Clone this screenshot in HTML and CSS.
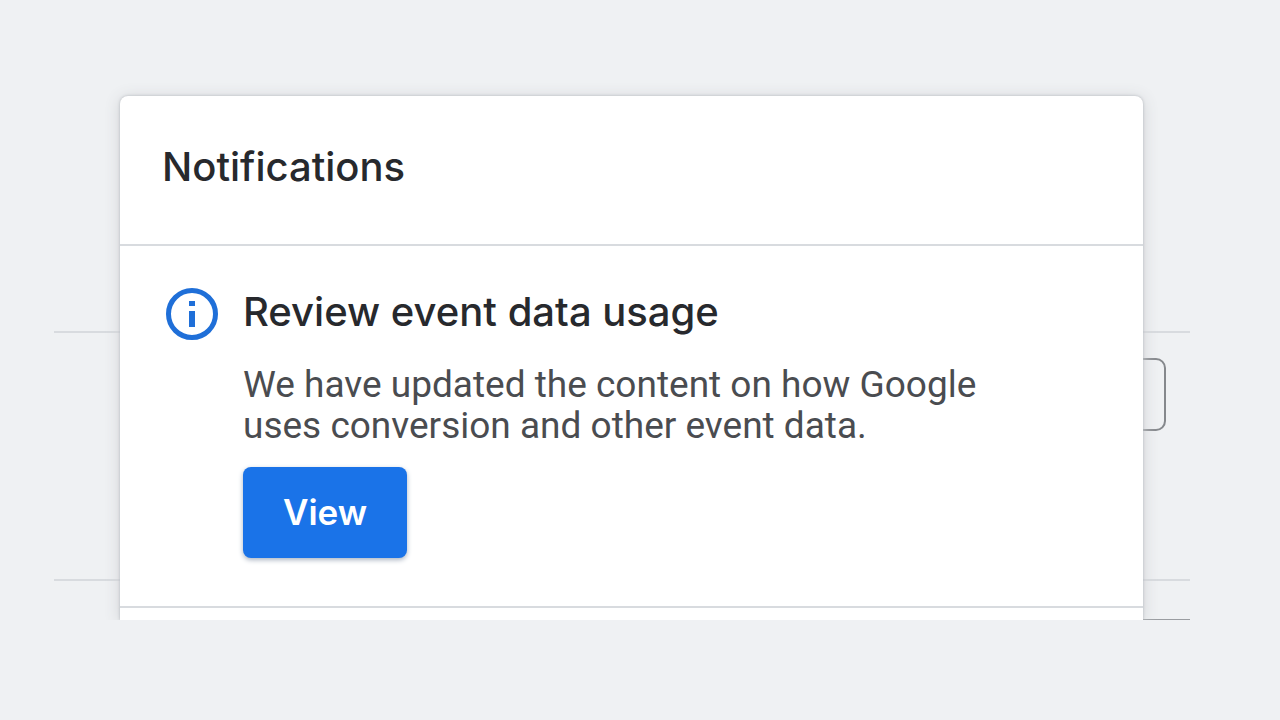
FILE: index.html
```html
<!DOCTYPE html>
<html lang="en">
<head>
<meta charset="utf-8">
<meta name="viewport" content="width=device-width, initial-scale=1">
<title>Notifications</title>
<link rel="stylesheet" href="styles.css">
</head>
<body>
<main class="stage">
  <div class="backdrop" aria-hidden="true">
    <div class="backdrop-top"></div>
    <div class="backdrop-row"><div class="backdrop-field"></div></div>
    <div class="backdrop-end"></div>
  </div>
  <section class="panel" aria-labelledby="panel-title">
    <header class="panel-header">
      <h1 class="title" id="panel-title">Notifications</h1>
    </header>
    <article class="notice">
      <svg class="notice-icon" viewBox="0 0 52 52" aria-hidden="true">
        <circle cx="26" cy="26" r="23.5" fill="none" stroke="currentColor" stroke-width="5"/>
        <path d="M23 13h6v5h-6zM23 23h6v16h-6z" fill="currentColor"/>
      </svg>
      <div class="notice-body">
        <h2 class="title">Review event data usage</h2>
        <p class="notice-text">We have updated the content on how Google uses conversion and other event data.</p>
        <button class="view-button" type="button">View</button>
      </div>
    </article>
    <div class="next-notice"></div>
  </section>
</main>
</body>
</html>
```
FILE: styles.css
```css
* {
  box-sizing: border-box;
}

body {
  margin: 0;
  background: #eff1f3;
  color: #27292d;
  font-family: Roboto, "Liberation Sans", sans-serif;
}

.stage {
  display: grid;
  margin: 50px 90px 100px 54px;
  overflow: hidden;
}

.backdrop,
.panel {
  grid-area: 1 / 1;
}

.backdrop {
  display: flex;
  flex-direction: column;
}

.backdrop-top {
  height: 283px;
  border-bottom: 2px solid #d8dbdf;
}

.backdrop-row {
  display: flex;
  justify-content: flex-end;
  height: 248px;
  padding: 25px 24px 0 0;
  border-bottom: 2px solid #d8dbdf;
}

.backdrop-field {
  width: 200px;
  height: 73px;
  border: 2px solid #85888c;
  border-radius: 10px;
}

.backdrop-end {
  flex: 1;
  margin-left: 50%;
  border-bottom: 1px solid #9a9da1;
}

.panel {
  margin: 46px 47px 0 66px;
  background: #fff;
  border-radius: 8px 8px 0 0;
  box-shadow: 0 0 3px #b4b8bd, 0 2px 16px #cfd1d4;
}

.panel-header {
  padding: 47px 42px 53px;
  border-bottom: 2px solid #d8dbdf;
}

.title {
  margin: 0;
  font-family: Inter, Roboto, sans-serif;
  font-size: 40px;
  font-weight: 500;
  line-height: 48px;
}

.notice {
  display: flex;
  gap: 25px;
  padding: 42px 46px 48px;
  border-bottom: 2px solid #d8dbdf;
}

.notice-icon {
  flex: none;
  width: 52px;
  height: 52px;
  color: #1f6fd8;
}

.notice-body {
  max-width: 780px;
}

.notice-text {
  margin: 28px 0 21px;
  color: #4a4c50;
  font-size: 37px;
  line-height: 41px;
}

.view-button {
  display: block;
  padding: 22px 40px;
  border: 0;
  border-radius: 8px;
  background: #1a73e8;
  box-shadow: 0 2px 5px #aab4c2;
  color: #fff;
  font-family: Inter, Roboto, sans-serif;
  font-size: 35px;
  font-weight: 600;
  line-height: 47px;
}

.next-notice {
  height: 12px;
}
```
